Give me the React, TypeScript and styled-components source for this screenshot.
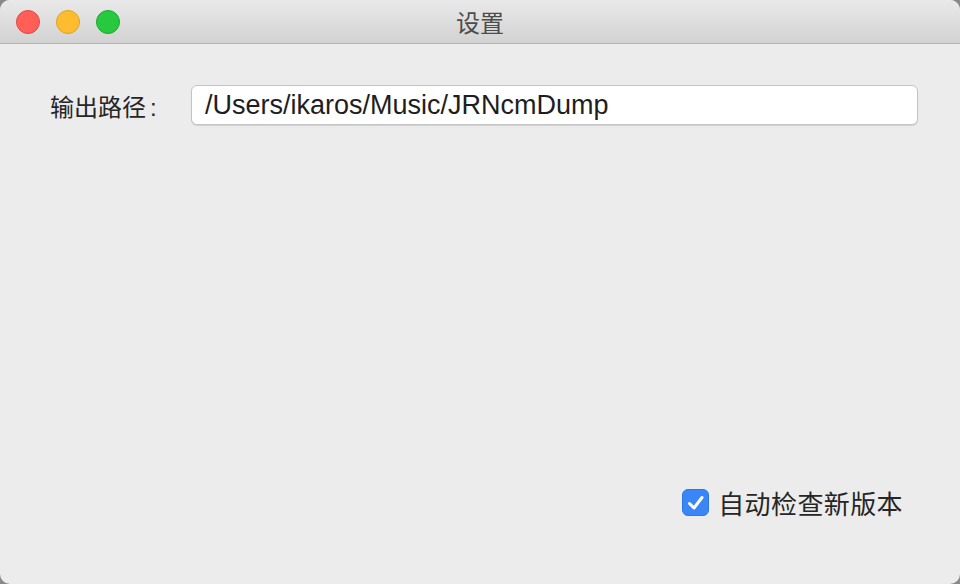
import React, { useState } from 'react'
import styled, { createGlobalStyle } from 'styled-components'

const GlobalStyle = createGlobalStyle`
  html, body {
    margin: 0;
    padding: 0;
    background: #8a8a8a;
  }
  * {
    box-sizing: border-box;
  }
`

const Window = styled.div`
  width: 960px;
  height: 584px;
  display: flex;
  flex-direction: column;
  background: #ececec;
  border-radius: 10px;
  overflow: hidden;
  font-family: "Liberation Sans", "Noto Sans CJK SC", sans-serif;
`

const TitleBar = styled.div`
  height: 44px;
  flex-shrink: 0;
  display: flex;
  align-items: center;
  position: relative;
  padding-left: 16px;
  background: linear-gradient(#e9e9e9, #d2d2d2);
  border-bottom: 1px solid #b4b4b4;
`

const Lights = styled.div`
  display: flex;
  gap: 16px;
`

const Light = styled.span<{ $fill: string; $edge: string }>`
  width: 24px;
  height: 24px;
  border-radius: 50%;
  background: ${(p) => p.$fill};
  border: 1px solid ${(p) => p.$edge};
`

const Title = styled.div`
  position: absolute;
  left: 0;
  right: 0;
  top: 0;
  bottom: 0;
  display: flex;
  align-items: center;
  justify-content: center;
  font-size: 24px;
  color: #4c4c4c;
  pointer-events: none;
`

const Content = styled.div`
  flex: 1;
  display: flex;
  flex-direction: column;
  padding: 41px 42px 63px 50px;
`

const Row = styled.div`
  display: flex;
  align-items: center;
`

const Label = styled.label`
  width: 141px;
  font-size: 24px;
  color: #262626;
`

const Colon = styled.span`
  margin-left: 4px;
`

const PathInput = styled.input`
  flex: 1;
  height: 40px;
  border: 1px solid #c4c4c4;
  border-radius: 6px;
  background: #fff;
  box-shadow: 0 1px 1px rgba(0, 0, 0, 0.12);
  padding: 0 13px;
  font-family: "Liberation Sans", sans-serif;
  font-size: 27px;
  color: #1e1e1e;
  outline: none;
`

const Spacer = styled.div`
  flex: 1;
`

const Footer = styled.div`
  display: flex;
  justify-content: flex-end;
  padding-right: 15px;
`

const CheckLabel = styled.label`
  display: flex;
  align-items: center;
  gap: 9px;
  font-size: 26px;
  letter-spacing: 0.4px;
  color: #262626;
  cursor: pointer;
`

const Box = styled.span<{ $on: boolean }>`
  width: 27px;
  height: 27px;
  border-radius: 6px;
  display: flex;
  align-items: center;
  justify-content: center;
  background: ${(p) => (p.$on ? '#3a86f7' : '#fff')};
  border: 1px solid ${(p) => (p.$on ? '#2f76e0' : '#b5b5b5')};
`

const Hidden = styled.input`
  display: none;
`

export default function App() {
  const [path, setPath] = useState('/Users/ikaros/Music/JRNcmDump')
  const [check, setCheck] = useState(true)

  return (
    <>
      <GlobalStyle />
      <Window>
        <TitleBar>
          <Lights>
            <Light $fill="#ff5f57" $edge="#e2463f" />
            <Light $fill="#febc2e" $edge="#dea123" />
            <Light $fill="#28c840" $edge="#1aab29" />
          </Lights>
          <Title>设置</Title>
        </TitleBar>
        <Content>
          <Row>
            <Label>
              输出路径<Colon>:</Colon>
            </Label>
            <PathInput value={path} onChange={(e) => setPath(e.target.value)} />
          </Row>
          <Spacer />
          <Footer>
            <CheckLabel>
              <Box $on={check}>
                {check && (
                  <svg width="22" height="22" viewBox="0 0 22 22">
                    <path d="M4.5 11.5 L9 16 L17 5.5" fill="none" stroke="#fff" strokeWidth="3" strokeLinecap="round" strokeLinejoin="round" />
                  </svg>
                )}
              </Box>
              <Hidden type="checkbox" checked={check} onChange={() => setCheck(!check)} />
              自动检查新版本
            </CheckLabel>
          </Footer>
        </Content>
      </Window>
    </>
  )
}
